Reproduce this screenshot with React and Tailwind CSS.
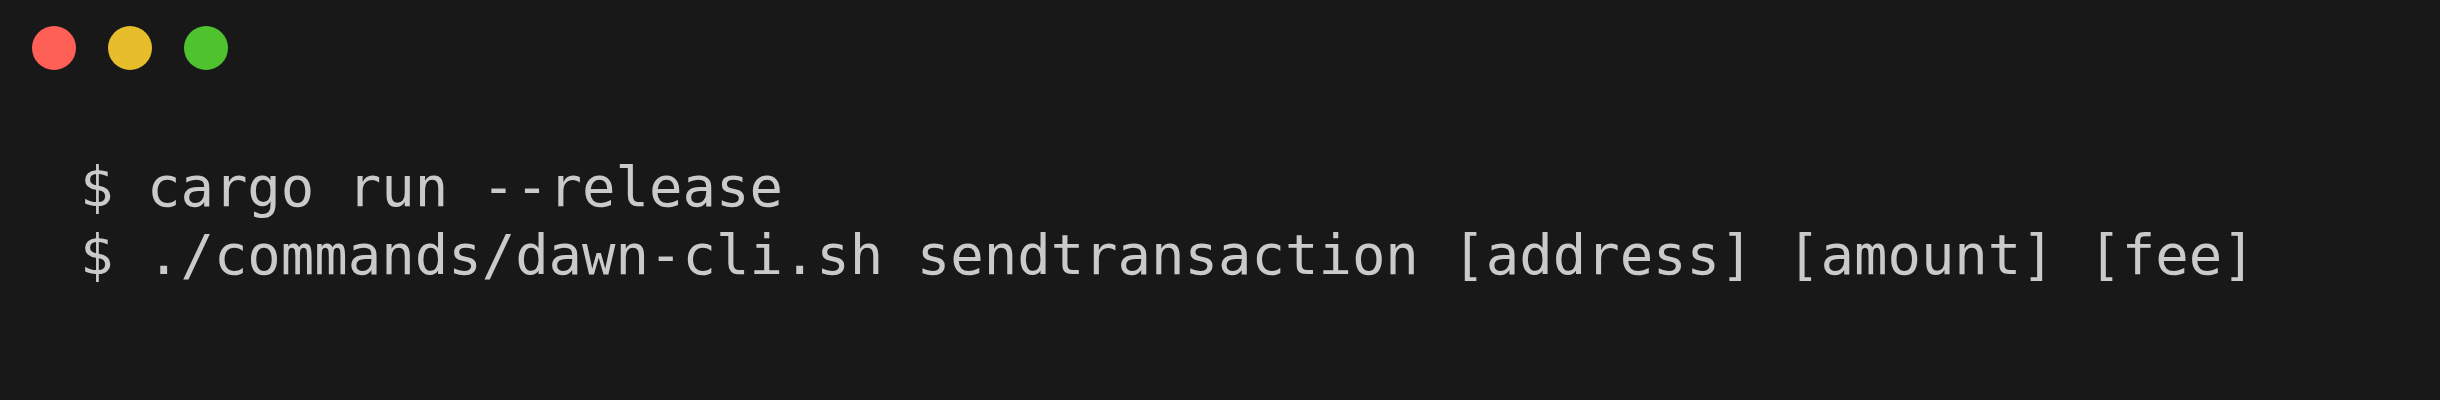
export default function App() {
  const lines = [
    'cargo run --release',
    './commands/dawn-cli.sh sendtransaction [address] [amount] [fee]',
  ];

  return (
    <div className="min-h-screen w-full bg-[#181818] pt-[26px] pl-8">
      {/* window controls */}
      <div className="flex items-center gap-8">
        <div className="w-11 h-11 rounded-full bg-[#fe5f57]" />
        <div className="w-11 h-11 rounded-full bg-[#e8bd2c]" />
        <div className="w-11 h-11 rounded-full bg-[#4fc22f]" />
      </div>

      <div
        className="mt-[83px] ml-12 text-[55.6px] leading-[68px] text-[#cacaca] whitespace-pre"
        style={{ fontFamily: '"DejaVu Sans Mono", "Liberation Mono", monospace' }}
      >
        {lines.map((l, i) => (
          <div key={i}>$ {l}</div>
        ))}
      </div>
    </div>
  );
}
